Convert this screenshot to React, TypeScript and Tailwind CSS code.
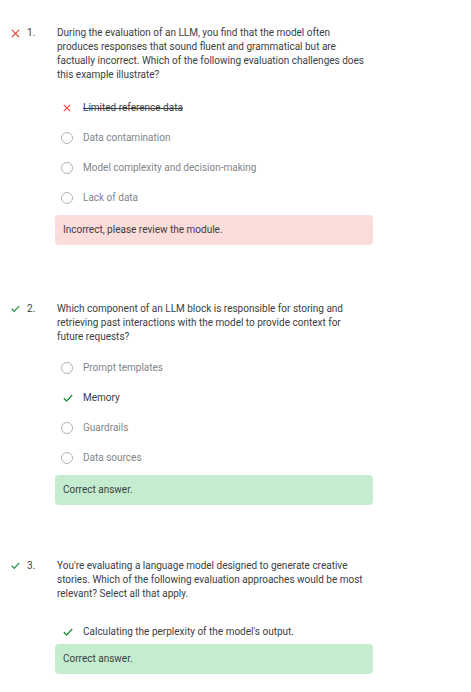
import React from 'react';

type Opt = { text: string; state: 'none' | 'wrong' | 'right' };

function XIcon({ size = 9 }: { size?: number }) {
  return (
    <svg width={size} height={size} viewBox="0 0 10 10" className="shrink-0">
      <path d="M1 1 L9 9 M9 1 L1 9" stroke="#e8453c" strokeWidth="1.4" fill="none" />
    </svg>
  );
}

function CheckIcon({ size = 10 }: { size?: number }) {
  return (
    <svg width={size} height={size * 0.8} viewBox="0 0 10 8" className="shrink-0">
      <path d="M0.8 4.2 L3.6 7 L9.2 1" stroke="#1e8e3e" strokeWidth="1.3" fill="none" />
    </svg>
  );
}

function Radio() {
  return <span className="block w-[12px] h-[12px] rounded-full border border-[#b0b4b9] bg-white shrink-0" />;
}

function Option({ opt }: { opt: Opt }) {
  return (
    <div className="flex items-center h-[30px] pl-[61px]">
      <div className="w-[22px] flex items-center">
        {opt.state === 'none' && <Radio />}
        {opt.state === 'wrong' && <span className="pl-[2px]"><XIcon size={8} /></span>}
        {opt.state === 'right' && <span className="pl-[2px]"><CheckIcon size={10} /></span>}
      </div>
      <span
        className={
          opt.state === 'wrong'
            ? 'text-[#3c4043] line-through'
            : opt.state === 'right'
            ? 'text-[#3c4043]'
            : 'text-[#80868b]'
        }
      >
        {opt.text}
      </span>
    </div>
  );
}

function Feedback({ ok }: { ok: boolean }) {
  return (
    <div
      className={`ml-[55px] w-[318px] h-[30px] rounded-[4px] flex items-center pl-[8px] text-[#3c4043] ${
        ok ? 'bg-[#c4edd0]' : 'bg-[#fadcda]'
      }`}
    >
      {ok ? 'Correct answer.' : 'Incorrect, please review the module.'}
    </div>
  );
}

function Question({
  n,
  ok,
  text,
  children,
}: {
  n: number;
  ok: boolean;
  text: string;
  children: React.ReactNode;
}) {
  return (
    <section>
      <div className="flex">
        <div className="w-[57px] flex items-start pl-[11px] h-[14px]">
          <div className="w-[16px] h-[14px] flex items-center">
            {ok ? <CheckIcon size={9} /> : <XIcon size={9} />}
          </div>
          <span className="text-[#3c4043]">{n}.</span>
        </div>
        <p className="w-[309px] text-[#3c4043]">{text}</p>
      </div>
      {children}
    </section>
  );
}

export default function App() {
  return (
    <main
      className="bg-white w-[471px] min-h-[692px] pt-[26px] text-[10px] leading-[14px]"
      style={{ fontFamily: 'Roboto, "Noto Sans", sans-serif' }}
    >
      <Question
        n={1}
        ok={false}
        text="During the evaluation of an LLM, you find that the model often produces responses that sound fluent and grammatical but are factually incorrect. Which of the following evaluation challenges does this example illustrate?"
      >
        <div className="mt-[11px]">
          <Option opt={{ text: 'Limited reference data', state: 'wrong' }} />
          <Option opt={{ text: 'Data contamination', state: 'none' }} />
          <Option opt={{ text: 'Model complexity and decision-making', state: 'none' }} />
          <Option opt={{ text: 'Lack of data', state: 'none' }} />
        </div>
        <div className="mt-[2px]">
          <Feedback ok={false} />
        </div>
      </Question>

      <div className="mt-[57px]">
        <Question
          n={2}
          ok={true}
          text="Which component of an LLM block is responsible for storing and retrieving past interactions with the model to provide context for future requests?"
        >
          <div className="mt-[9px]">
            <Option opt={{ text: 'Prompt templates', state: 'none' }} />
            <Option opt={{ text: 'Memory', state: 'right' }} />
            <Option opt={{ text: 'Guardrails', state: 'none' }} />
            <Option opt={{ text: 'Data sources', state: 'none' }} />
          </div>
          <div className="mt-[2px]">
            <Feedback ok={true} />
          </div>
        </Question>
      </div>

      <div className="mt-[54px]">
        <Question
          n={3}
          ok={true}
          text="You're evaluating a language model designed to generate creative stories. Which of the following evaluation approaches would be most relevant? Select all that apply."
        >
          <div className="mt-[16px]">
            <Option opt={{ text: "Calculating the perplexity of the model's output.", state: 'right' }} />
          </div>
          <div className="-mt-[3px]">
            <Feedback ok={true} />
          </div>
        </Question>
      </div>
    </main>
  );
}
